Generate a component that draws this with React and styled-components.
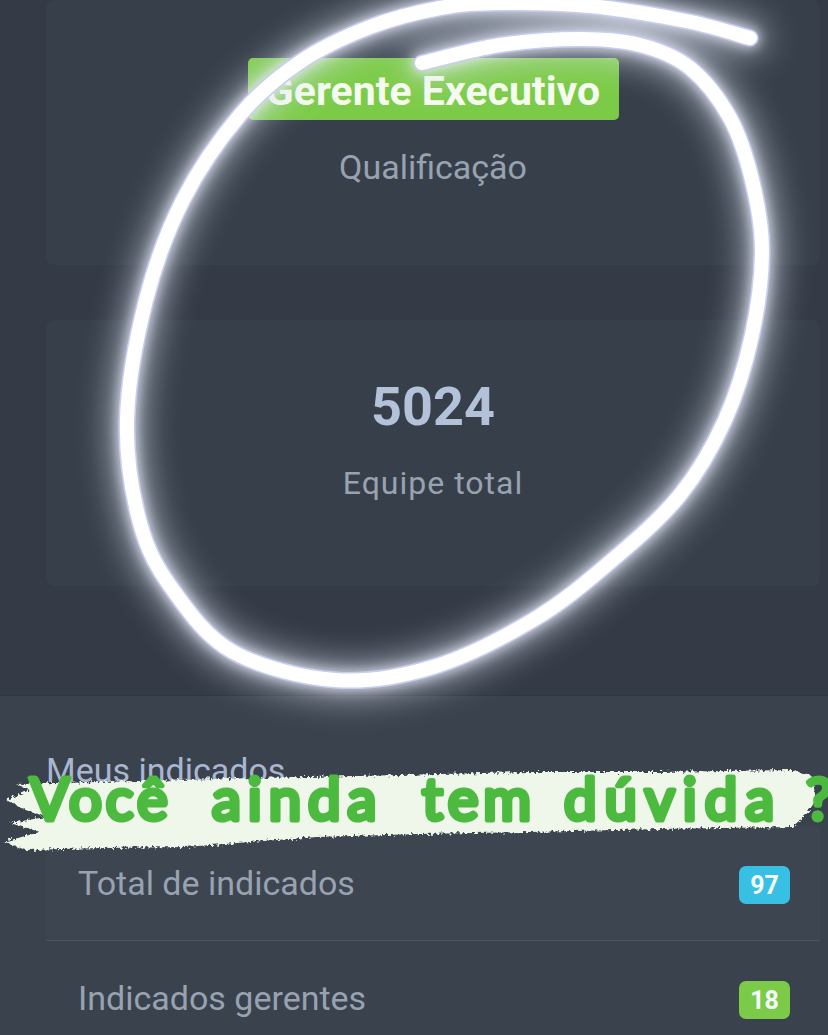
import React from 'react';
import styled, {createGlobalStyle} from 'styled-components';

const GlobalStyle = createGlobalStyle`
  html, body {
    margin: 0;
    padding: 0;
    background: #343b46;
  }
  * {
    box-sizing: border-box;
  }
`

// hand drawn loop, in page coordinates
const loopPoints = [
    [422, 63], [500, 45], [580, 39], [640, 45], [690, 68], [730, 118], [752, 180], [762, 250], [752, 335],
    [725, 420], [680, 495], [610, 562], [533, 620], [433, 667], [335, 680], [233, 652], [173, 590],
    [140, 523], [127, 420], [146, 300], [183, 200], [240, 115], [300, 62], [370, 27], [440, 8], [500, 3],
    [590, 6], [686, 21], [750, 38],
]

const toPath = (pts) => {
    let d = `M${pts[0][0]} ${pts[0][1]}`
    for (let i = 0; i < pts.length - 1; i++) {
        const p0 = pts[Math.max(i - 1, 0)]
        const p1 = pts[i]
        const p2 = pts[i + 1]
        const p3 = pts[Math.min(i + 2, pts.length - 1)]
        const c1x = p1[0] + (p2[0] - p0[0]) / 6
        const c1y = p1[1] + (p2[1] - p0[1]) / 6
        const c2x = p2[0] - (p3[0] - p1[0]) / 6
        const c2y = p2[1] - (p3[1] - p1[1]) / 6
        d += ` C${c1x} ${c1y} ${c2x} ${c2y} ${p2[0]} ${p2[1]}`
    }
    return d
}

const loopPath = toPath(loopPoints)

const brushShape = '16,784 140,781 264,778 400,775 528,772 660,772 792,770 812,776 816,800 806,815 792,827 660,829 528,832 420,834 317,837 250,842 185,847 100,848 26,850 3,842 40,832 10,823 46,817 22,808 6,800 30,790'

const App = () => {
    return (
        <Page>
            <GlobalStyle/>
            <Card height={265} padding={58} gap={27} mb={55}>
                <Pill>Gerente Executivo</Pill>
                <CardLabel>Qualificação</CardLabel>
            </Card>
            <Card height={266} padding={62} gap={31} mb={109}>
                <BigNumber>5024</BigNumber>
                <CardLabel spaced>Equipe total</CardLabel>
            </Card>
            <Section>
                <SectionTitle>Meus indicados</SectionTitle>
                <Row bordered>
                    <RowLabel>Total de indicados</RowLabel>
                    <Badge color="#38c0e4">97</Badge>
                </Row>
                <Row>
                    <RowLabel>Indicados gerentes</RowLabel>
                    <Badge color="#7ccb48">18</Badge>
                </Row>
            </Section>

            <Scribble viewBox="0 0 828 1035">
                <defs>
                    <filter id="wide" x="-20%" y="-20%" width="140%" height="140%">
                        <feGaussianBlur stdDeviation="17"/>
                    </filter>
                    <filter id="near" x="-20%" y="-20%" width="140%" height="140%">
                        <feGaussianBlur stdDeviation="6"/>
                    </filter>
                    <filter id="rough" x="-5%" y="-20%" width="110%" height="140%">
                        <feTurbulence type="fractalNoise" baseFrequency="0.35" numOctaves="2" seed="4"/>
                        <feDisplacementMap in="SourceGraphic" scale="7"/>
                    </filter>
                </defs>
                <path d={loopPath} fill="none" stroke="#dfe3f5" strokeWidth="30" strokeLinecap="round" opacity=".7" filter="url(#wide)"/>
                <path d={loopPath} fill="none" stroke="#eceffa" strokeWidth="20" strokeLinecap="round" opacity=".75" filter="url(#near)"/>
                <path d={loopPath} fill="none" stroke="#c9cdf2" strokeWidth="17" strokeLinecap="round"/>
                <path d={loopPath} fill="none" stroke="#ffffff" strokeWidth="14" strokeLinecap="round"/>
                <polygon points={brushShape} fill="#eff7ea" filter="url(#rough)"/>
                <Question y="820">
                    <Word x="30" spacing={4}>Você </Word>
                    <Word x="212" spacing={7}>ainda </Word>
                    <Word x="422" spacing={5}>tem </Word>
                    <Word x="564" spacing={8}>dúvida </Word>
                    <Word x="806" spacing={4}>?</Word>
                </Question>
            </Scribble>
        </Page>
    );
};

export default App;

const Page = styled.div`
  position: relative;
  width: 828px;
  height: 1035px;
  overflow: hidden;
  background: #343b46;
  font-family: Roboto, "Liberation Sans", sans-serif;
`

const Card = styled.div`
  display: flex;
  flex-direction: column;
  align-items: center;
  gap: ${props => props.gap}px;
  height: ${props => props.height}px;
  margin: 0 8px ${props => props.mb}px 46px;
  padding-top: ${props => props.padding}px;
  background: #37404a;
  border-radius: 8px;
`

const Pill = styled.div`
  width: 371px;
  height: 62px;
  background: #7ccb48;
  border-radius: 5px;
  color: #f6fbf0;
  font-size: 41px;
  font-weight: 700;
  line-height: 66px;
  text-align: center;
  white-space: nowrap;
`

const CardLabel = styled.div`
  color: #98a2b0;
  font-size: ${props => props.spaced ? '32px' : '34px'};
  line-height: 40px;
  letter-spacing: ${props => props.spaced ? '1px' : '0'};
`

const BigNumber = styled.div`
  color: #b3c2d9;
  font-size: 54px;
  font-weight: 700;
  line-height: 50px;
`

const Section = styled.div`
  height: 340px;
  padding: 56px 8px 0 46px;
  background: #3a434d;
  border-top: 1px solid #2f3540;
`

const SectionTitle = styled.div`
  margin-bottom: 38px;
  color: #aab6cf;
  font-size: 34px;
  line-height: 36px;
`

const Row = styled.div`
  display: flex;
  justify-content: space-between;
  align-items: flex-start;
  height: ${props => props.bordered ? '115px' : '94px'};
  padding: 37px 30px 0 32px;
  background: ${props => props.bordered ? '#3c4550' : 'transparent'};
  border-bottom: ${props => props.bordered ? '1px solid #4a5360' : 'none'};
`

const RowLabel = styled.div`
  color: #98a2b0;
  font-size: 34px;
  line-height: 40px;
`

const Badge = styled.div`
  width: 51px;
  height: 38px;
  margin-top: 3px;
  background: ${props => props.color};
  border-radius: 7px;
  color: #f4fbfd;
  font-size: 25px;
  font-weight: 700;
  line-height: 40px;
  text-align: center;
`

const Scribble = styled.svg`
  position: absolute;
  top: 0;
  left: 0;
  width: 828px;
  height: 1035px;
`

const Question = styled.text`
  fill: #4cb93f;
  stroke: #4cb93f;
  stroke-width: 5px;
  stroke-linejoin: round;
  stroke-linecap: round;
  font-family: Lato, sans-serif;
  font-size: 58px;
`

const Word = styled.tspan`
  letter-spacing: ${props => props.spacing}px;
`
